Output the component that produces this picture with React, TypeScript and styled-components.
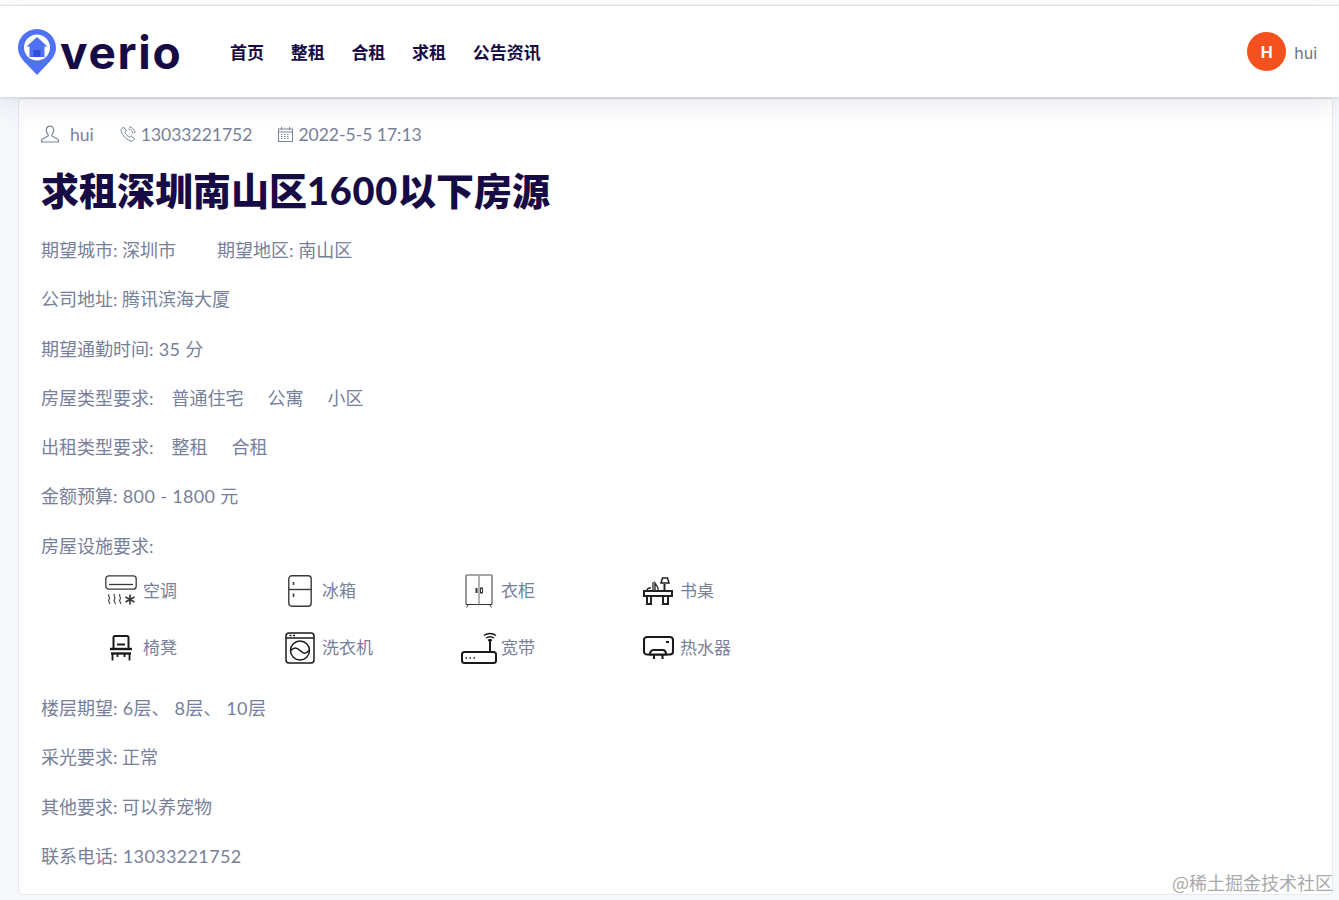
import React from 'react';
import styled, { createGlobalStyle } from 'styled-components';

const CJK = `'Lato', 'Noto Sans CJK SC', sans-serif`;

const GlobalStyle = createGlobalStyle`
  html, body {
    margin: 0;
    padding: 0;
    background: #f6f7fb;
    font-family: ${CJK};
  }
  * { box-sizing: border-box; }
`;

const Page = styled.div`
  position: relative;
  width: 1339px;
  height: 900px;
  overflow: hidden;
  background: #f7f8fc;
`;

const TopStrip = styled.div`
  height: 5px;
  background: #fff;
`;

const Header = styled.header`
  position: relative;
  z-index: 2;
  display: flex;
  align-items: center;
  height: 92px;
  padding: 0 22px 0 17px;
  background: #fff;
  border-top: 1px solid #dedfe1;
  box-shadow: 0 1px 3px rgba(30, 40, 80, 0.14), 0 8px 26px rgba(40, 50, 100, 0.1);
`;

const Brand = styled.div`
  display: flex;
  align-items: center;
  width: 213px;
`;

const BrandName = styled.span`
  margin-left: 3px;
  font-family: 'Inter', sans-serif;
  font-size: 46px;
  line-height: 50px;
  font-weight: 700;
  letter-spacing: 1.7px;
  color: #160b45;
`;

const Nav = styled.nav`
  display: flex;
  gap: 26.7px;
`;

const NavLink = styled.a`
  font-family: 'Noto Sans CJK SC', sans-serif;
  font-size: 17px;
  line-height: 24px;
  font-weight: 700;
  color: #160b45;
`;

const User = styled.div`
  display: flex;
  align-items: center;
  gap: 8px;
  margin-left: auto;
`;

const Avatar = styled.div`
  display: flex;
  align-items: center;
  justify-content: center;
  width: 39px;
  height: 39px;
  border-radius: 50%;
  background: #f4511e;
  color: #fff;
  font-family: 'Inter', sans-serif;
  font-size: 16px;
  font-weight: 700;
`;

const UserName = styled.span`
  margin-top: 2px;
  font-family: 'Inter', sans-serif;
  font-size: 16px;
  color: #6c7280;
`;

const Card = styled.main`
  height: 797px;
  margin: 1px 6px 0 18px;
  padding: 22px 22px 0 22px;
  background: #fff;
  border: 1px solid #e6e8ef;
  border-radius: 4px;
`;

const Meta = styled.div`
  display: flex;
  align-items: center;
  gap: 26px;
  height: 26px;
`;

const MetaItem = styled.span<{ $gap: number }>`
  display: flex;
  align-items: center;
  gap: ${(props) => props.$gap}px;
  font-size: 17.5px;
  color: #77809a;
`;

const Title = styled.h1`
  margin: 18px 0 23px;
  font-family: 'Lato', 'Noto Sans CJK SC', sans-serif;
  font-size: 38px;
  line-height: 50px;
  font-weight: 900;
  color: #160b45;
`;

const TitleDigits = styled.span`
  letter-spacing: 0.7px;
`;

const Row = styled.p`
  display: flex;
  height: 25px;
  margin: 0 0 24.3px;
  font-size: 18px;
  line-height: 25px;
  color: #77809a;
  white-space: pre;
`;

const Latin = styled.span`
  letter-spacing: 0.35px;
`;

const Value = styled.span`
  margin-left: 41px;
`;

const Tag = styled.span`
  margin-left: 18px;

  & + & {
    margin-left: 24px;
  }
`;

const Facilities = styled.div`
  display: grid;
  grid-template-columns: repeat(4, 179px);
  grid-auto-rows: 57px;
  margin: -22px 0 21px 56px;
`;

const Facility = styled.div`
  display: flex;
  align-items: center;
  height: 57px;
  font-size: 17px;
  color: #77809a;
`;

const IconSlot = styled.span`
  display: flex;
  align-items: center;
  justify-content: center;
  flex: none;
  width: 46px;
  height: 44px;
  padding: 2px 0 0 2px;
`;

const Watermark = styled.div`
  position: absolute;
  right: 6px;
  bottom: 7px;
  z-index: 3;
  font-family: 'Noto Sans CJK SC', sans-serif;
  font-size: 18px;
  line-height: 22px;
  color: #a9a9a9;
`;

const LogoPin = () => (
  <svg width="40" height="48" viewBox="0 0 40 48">
    <path d="M20 1C9.500 1 1 9.400 1 19.800c0 6.400 3.600 11.200 7.600 15.300L20 47l11.400-11.900c4-4.100 7.600-8.900 7.600-15.300C39 9.400 30.500 1 20 1z" fill="#4f72f5" />
    <circle cx="20" cy="19.500" r="13" fill="#fff" />
    <path d="M20 9l-10.500 9.500h3V29h15V18.500h3z" fill="#4f72f5" />
    <rect x="16.500" y="22" width="7" height="7" fill="#2f50dc" />
  </svg>
);

const UserIcon = () => (
  <svg width="18" height="18" viewBox="0 0 18 18" fill="none" stroke="#7d8599" strokeWidth="1.200">
    <path d="M9 1.200c-2.300 0-3.700 1.700-3.700 4 0 1.800.8 3.300 1.800 4.200v1.500L1.500 14c-.6.300-.9.800-.9 1.500v1.500h16.800v-1.500c0-.7-.3-1.200-.9-1.500l-5.600-3.100V9.400c1-.9 1.800-2.400 1.800-4.200 0-2.300-1.400-4-3.700-4z" />
  </svg>
);

const PhoneIcon = () => (
  <svg width="16" height="16" viewBox="0 0 16 16" fill="none" stroke="#7d8599" strokeWidth="1">
    <path d="M1 3.500 3.500 1l2.700 3.600-1.400 1.500c.6 1.900 2.900 4.500 5 5.200l1.500-1.400 3.500 2.900-2.600 2.500C7 14.800 1.500 9 1 3.500z" />
    <path d="M8.500 3c2.400.3 4.200 2.100 4.500 4.500M9 .8c3.300.3 5.900 2.900 6.200 6.200" />
  </svg>
);

const CalendarIcon = () => (
  <svg width="15" height="15" viewBox="0 0 15 15" fill="none" stroke="#7d8599" strokeWidth="1">
    <rect x=".5" y="2" width="14" height="12.500" />
    <path d="M.5 5h14M3.500 0v3M11.500 0v3" />
    <path d="M3 7.500h9M3 9.500h9M3 11.500h9" strokeDasharray="1.500 1.500" />
  </svg>
);

const AirIcon = () => (
  <svg width="32" height="32" viewBox="0 0 32 32" fill="none" stroke="#3a3a3a">
    <rect x=".8" y=".8" width="30.400" height="13.400" rx="3" strokeWidth="1.300" />
    <path d="M4 9.500h24" strokeWidth="1.300" />
    <path d="M4 19c-2 2.200 2 3.400 0 5.500s2 3 .5 4.500M9.500 19c-2 2.200 2 3.400 0 5.500s2 3 .5 4.500M15 19c-2 2.200 2 3.400 0 5.500s2 3 .5 4.500" strokeWidth="1.100" />
    <path d="M25 19.500v10M20.500 22l9 5M29.500 22l-9 5" strokeWidth="1.700" />
  </svg>
);

const FridgeIcon = () => (
  <svg width="24" height="32" viewBox="0 0 24 32" fill="none" stroke="#3a3a3a" strokeWidth="1.400">
    <rect x=".8" y=".8" width="22.400" height="30.400" rx="3" />
    <path d="M.8 14.500h22.400" />
    <path d="M5.500 7v3M5.500 18.500v3.500" strokeWidth="1.600" />
  </svg>
);

const WardrobeIcon = () => (
  <svg width="28" height="34" viewBox="0 0 28 34" fill="none" stroke="#333" strokeWidth="1">
    <path d="M1 1h26v29.500H1z" />
    <path d="M1 1h26" stroke="#aaa" strokeWidth="1.500" />
    <path d="M14 1v29.500" stroke="#999" strokeWidth="1.500" />
    <path d="M11.500 14v5" strokeWidth="2" />
    <rect x="15.500" y="14" width="2" height="5" />
    <path d="M3.500 30.500 1.500 33.500M24.500 30.500l2 3" />
  </svg>
);

const DeskIcon = () => (
  <svg width="30" height="28" viewBox="0 0 30 28" fill="none" stroke="#222">
    <path d="M1 14h28v5H1z" strokeWidth="2" />
    <path d="M4 19v8h4v-8M20 19v8h5v-8" strokeWidth="2" />
    <path d="M21.500 14V7" strokeWidth="2" />
    <path d="M18 6l1.500-5h5l1.500 5z" strokeWidth="1.500" />
    <path d="M4 14c0-2 1-3 3-3v-1M10 14V5M12 14V6l3 5v3" strokeWidth="1.300" />
  </svg>
);

const ChairIcon = () => (
  <svg width="24" height="26" viewBox="0 0 24 26" fill="none" stroke="#1a1a1a">
    <path d="M4.500 13V2.500a1.500 1.500 0 0 1 1.500-1.500h12a1.500 1.500 0 0 1 1.500 1.500V13" strokeWidth="2" />
    <path d="M8 9.500h8" strokeWidth="2" />
    <path d="M1 14h22" strokeWidth="2.400" />
    <path d="M2 18.500h20" strokeWidth="2.400" />
    <path d="M3.500 19v6.500M20.500 19v6.500M8.500 19v3M15.500 19v3" strokeWidth="1.800" />
  </svg>
);

const WasherIcon = () => (
  <svg width="30" height="32" viewBox="0 0 30 32" fill="none" stroke="#1a1a1a" strokeWidth="1.500">
    <rect x="1" y="1" width="28" height="30" rx="3" />
    <path d="M1 6h28" />
    <path d="M4.500 3.500h2M8 3.500h2" strokeWidth="1.400" />
    <circle cx="15" cy="18.500" r="9.500" />
    <path d="M6 18.500c3-3.500 5.500-3.500 9 0s6 3.500 9 0" />
  </svg>
);

const RouterIcon = () => (
  <svg width="36" height="32" viewBox="0 0 36 32" fill="none" stroke="#1a1a1a">
    <rect x="1" y="20" width="34" height="11" rx="2.500" strokeWidth="2" />
    <path d="M4.500 26h2M8.500 26h2M12.500 26h2" strokeWidth="1.500" strokeDasharray="1.500 1" />
    <path d="M29 20V7" strokeWidth="2" />
    <path d="M23 3.500c3.500-2.800 8.500-2.800 12 0M25 6c2.500-1.700 5.500-1.700 8 0M27 8.500c1.300-.8 2.700-.8 4 0" strokeWidth="1.500" />
  </svg>
);

const HeaterIcon = () => (
  <svg width="31" height="24" viewBox="0 0 31 24" fill="none" stroke="#1a1a1a" strokeWidth="2.100">
    <rect x="1" y="1" width="29" height="17.500" rx="3" />
    <path d="M7 18.500c0-3 1.500-4.500 3.500-4.500h9c2 0 3.500 1.500 3.500 4.500z" fill="#fff" />
    <path d="M11 19v4M19.500 19v4" />
    <path d="M23 6h3" />
  </svg>
);

const facilities: { name: string; icon: React.ReactNode }[] = [
  { name: '空调', icon: <AirIcon /> },
  { name: '冰箱', icon: <FridgeIcon /> },
  { name: '衣柜', icon: <WardrobeIcon /> },
  { name: '书桌', icon: <DeskIcon /> },
  { name: '椅凳', icon: <ChairIcon /> },
  { name: '洗衣机', icon: <WasherIcon /> },
  { name: '宽带', icon: <RouterIcon /> },
  { name: '热水器', icon: <HeaterIcon /> },
];

export default function App(): JSX.Element {
  return (
    <Page>
      <GlobalStyle />
      <TopStrip />
      <Header>
        <Brand>
          <LogoPin />
          <BrandName>verio</BrandName>
        </Brand>
        <Nav>
          {['首页', '整租', '合租', '求租', '公告资讯'].map((item) => (
            <NavLink key={item}>{item}</NavLink>
          ))}
        </Nav>
        <User>
          <Avatar>H</Avatar>
          <UserName>hui</UserName>
        </User>
      </Header>
      <Card>
        <Meta>
          <MetaItem $gap={11}><UserIcon />hui</MetaItem>
          <MetaItem $gap={5}><PhoneIcon />13033221752</MetaItem>
          <MetaItem $gap={5}><CalendarIcon />2022-5-5 17:13</MetaItem>
        </Meta>
        <Title>求租深圳南山区<TitleDigits>1600</TitleDigits>以下房源</Title>
        <Row><span>期望城市: 深圳市</span><Value>期望地区: 南山区</Value></Row>
        <Row><span>公司地址: 腾讯滨海大厦</span></Row>
        <Row><span>期望通勤时间<Latin>: 35 </Latin>分</span></Row>
        <Row><span>房屋类型要求:</span><Tag>普通住宅</Tag><Tag>公寓</Tag><Tag>小区</Tag></Row>
        <Row><span>出租类型要求:</span><Tag>整租</Tag><Tag>合租</Tag></Row>
        <Row><span>金额预算<Latin>: 800 - 1800 </Latin>元</span></Row>
        <Row>房屋设施要求:</Row>
        <Facilities>
          {facilities.map((item) => (
            <Facility key={item.name}>
              <IconSlot>{item.icon}</IconSlot>
              {item.name}
            </Facility>
          ))}
        </Facilities>
        <Row><span>楼层期望<Latin>: 6</Latin>层、<Latin> 8</Latin>层、<Latin> 10</Latin>层</span></Row>
        <Row><span>采光要求: 正常</span></Row>
        <Row><span>其他要求: 可以养宠物</span></Row>
        <Row><span>联系电话<Latin>: 13033221752</Latin></span></Row>
      </Card>
      <Watermark>@稀土掘金技术社区</Watermark>
    </Page>
  );
}
